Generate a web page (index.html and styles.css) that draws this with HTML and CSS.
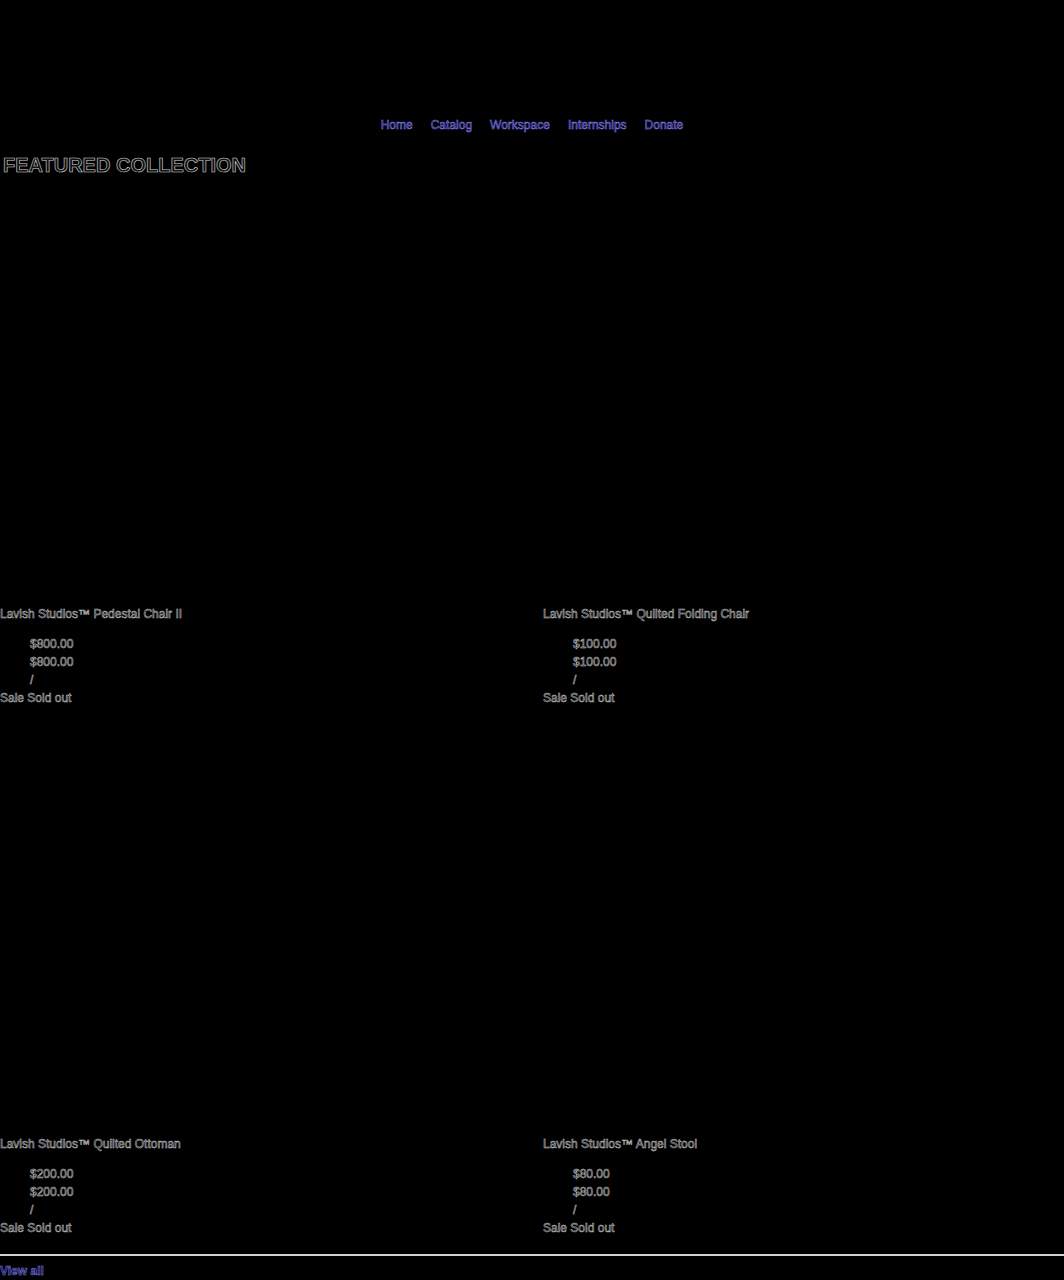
FILE: index.html
```html
<!DOCTYPE html>
<html lang="en">
<head>
<meta charset="utf-8">
<title>Featured collection</title>
<link rel="stylesheet" href="styles.css">
</head>
<body>
<header class="site-header">
  <nav class="main-nav">
    <a href="#">Home</a>
    <a href="#">Catalog</a>
    <a href="#">Workspace</a>
    <a href="#">Internships</a>
    <a href="#">Donate</a>
  </nav>
</header>
<main>
  <h2 class="section-title">FEATURED COLLECTION</h2>
  <div class="product-grid">
    <div class="card">
      <div class="card-media"></div>
      <div class="card-title">Lavish Studios™ Pedestal Chair II</div>
      <ul class="price-list">
        <li>$800.00</li>
        <li>$800.00</li>
        <li>/</li>
      </ul>
      <div class="badges">Sale Sold out</div>
    </div>
    <div class="card">
      <div class="card-media"></div>
      <div class="card-title">Lavish Studios™ Quilted Folding Chair</div>
      <ul class="price-list">
        <li>$100.00</li>
        <li>$100.00</li>
        <li>/</li>
      </ul>
      <div class="badges">Sale Sold out</div>
    </div>
    <div class="card">
      <div class="card-media"></div>
      <div class="card-title">Lavish Studios™ Quilted Ottoman</div>
      <ul class="price-list">
        <li>$200.00</li>
        <li>$200.00</li>
        <li>/</li>
      </ul>
      <div class="badges">Sale Sold out</div>
    </div>
    <div class="card">
      <div class="card-media"></div>
      <div class="card-title">Lavish Studios™ Angel Stool</div>
      <ul class="price-list">
        <li>$80.00</li>
        <li>$80.00</li>
        <li>/</li>
      </ul>
      <div class="badges">Sale Sold out</div>
    </div>
  </div>
  <hr class="divider">
  <a class="view-all" href="#">View all</a>
</main>
</body>
</html>
```
FILE: styles.css
```css
html, body {
  margin: 0;
  padding: 0;
  background: #000;
}
body {
  font-family: "Liberation Sans", Arial, sans-serif;
  font-size: 12px;
  line-height: 18px;
  color: #111;
  -webkit-text-stroke: 0.5px #c8c8c8;
}
a {
  color: #0d0d2a;
  -webkit-text-stroke: 0.5px #8a86ff;
  text-decoration: none;
}
.site-header {
  padding-top: 116px;
  height: 18px;
}
.main-nav {
  display: flex;
  justify-content: center;
  gap: 18px;
}
.section-title {
  margin: 0;
  padding-top: 19px;
  font-size: 20px;
  line-height: 24px;
  font-weight: bold;
  letter-spacing: 0;
  padding-left: 3px;
  -webkit-text-stroke: 0.6px #d8d8d8;
}
.product-grid {
  display: grid;
  grid-template-columns: 1fr 1fr;
  column-gap: 22px;
}
.card-media {
  height: 428px;
}
.card-title {
  margin-bottom: 12px;
}
.price-list {
  list-style: none;
  margin: 0;
  padding-left: 30px;
}
.divider {
  margin: 17px 0 6px;
  border: 0;
  border-top: 2px solid #d0d0d0;
}
.view-all {
  display: block;
  font-weight: bold;
}
```
